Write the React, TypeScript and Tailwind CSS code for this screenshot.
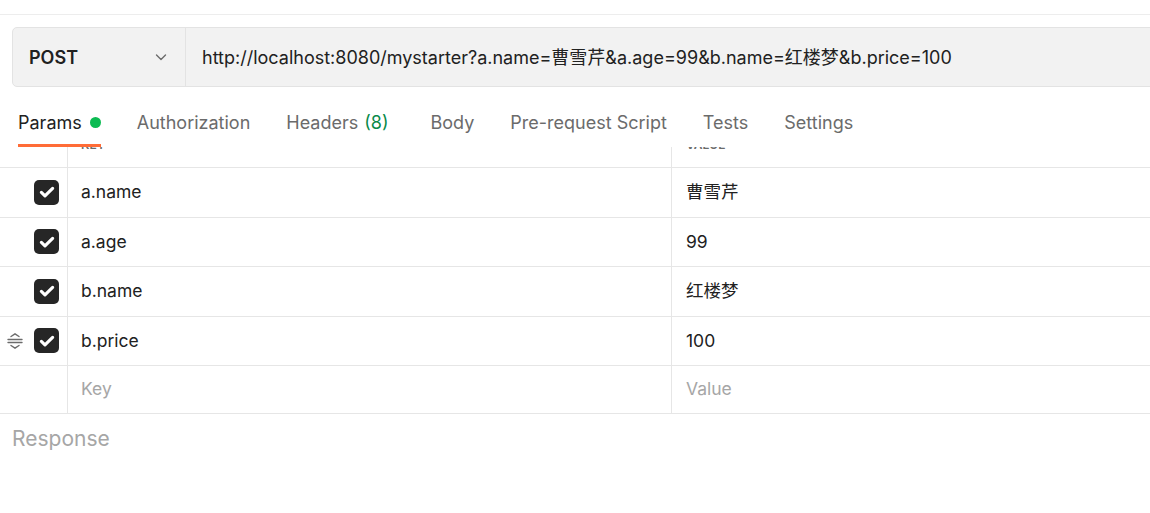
import React from 'react';

interface Param {
  key: string;
  value: string;
  drag?: boolean;
}

const params: Param[] = [
  { key: 'a.name', value: '曹雪芹' },
  { key: 'a.age', value: '99' },
  { key: 'b.name', value: '红楼梦' },
  { key: 'b.price', value: '100', drag: true },
];

const tabs = ['Authorization', 'Headers', 'Body', 'Pre-request Script', 'Tests', 'Settings'];

function Checkbox() {
  return (
    <div className="w-[25px] h-[25px] rounded-[5px] bg-[#262626] flex items-center justify-center">
      <svg width="18" height="18" viewBox="0 0 16 16" fill="none">
        <path d="M3 8.4l3.2 3.1L13 4.8" stroke="#fff" strokeWidth="2.8" strokeLinecap="round" strokeLinejoin="round" />
      </svg>
    </div>
  );
}

function DragHandle() {
  return (
    <svg width="18" height="18" viewBox="0 0 18 18" fill="none" stroke="#6b6b6b" strokeWidth="1.4" strokeLinecap="round" strokeLinejoin="round">
      <path d="M5 4.5L9 1.8l4 2.7" />
      <path d="M2 7.5h14" />
      <path d="M2 10.5h14" />
      <path d="M5 13.5l4 2.7 4-2.7" />
    </svg>
  );
}

export default function App() {
  return (
    <div className="w-full h-[513px] bg-white overflow-hidden text-[#212121]" style={{ fontFamily: 'Inter, "Noto Sans CJK SC", sans-serif' }}>
      {/* top strip */}
      <div className="h-[15px] border-b border-[#ededed]" />

      {/* request bar */}
      <div className="mt-[12px] ml-[12px] mr-[-10px] h-[60px] flex bg-[#f2f2f2] border border-[#e3e3e3] rounded-l-[5px]">
        <div className="w-[173px] flex items-center justify-between pl-[16px] pr-[16px] border-r border-[#e3e3e3]">
          <span className="text-[18px] font-semibold text-[#212121]">POST</span>
          <svg width="16" height="16" viewBox="0 0 16 16" fill="none">
            <path d="M3.5 6l4.5 4.5L12.5 6" stroke="#6b6b6b" strokeWidth="1.4" strokeLinecap="round" strokeLinejoin="round" />
          </svg>
        </div>
        <div className="flex items-center pl-[16px] text-[18px] text-[#212121] whitespace-nowrap">
          http://localhost:8080/mystarter?a.name=曹雪芹&amp;a.age=99&amp;b.name=红楼梦&amp;b.price=100
        </div>
      </div>

      {/* tabs */}
      <div className="h-[60px] flex items-end pl-[18px] gap-[36px] text-[18px] text-[#6b6b6b]">
        <div className="relative h-[47px] flex items-center gap-[8px] pb-[2px] text-[#212121]">
          <span>Params</span>
          <span className="w-[11px] h-[11px] rounded-full bg-[#0cbb52]" />
          <span className="absolute left-0 right-0 bottom-0 h-[3px] bg-[#ff6c37]" />
        </div>
        {tabs.map((t) => (
          <div key={t} className={`h-[47px] flex items-center pb-[2px] whitespace-nowrap ${t === 'Headers' ? 'pr-[6px]' : ''}`}>
            {t}
            {t === 'Headers' && <span className="ml-[6px] text-[#0a8a4a]">(8)</span>}
          </div>
        ))}
      </div>

      {/* params table */}
      <div className="text-[17.5px]">
        <div className="flex h-[21px] border-b border-[#e6e6e6] overflow-hidden text-[12px] text-[#6b6b6b] font-semibold">
          <div className="w-[68px] border-r border-[#e6e6e6]" />
          <div className="w-[604px] border-r border-[#e6e6e6] pl-[13px]">
            <div className="mt-[-8px] leading-[12px]">KEY</div>
          </div>
          <div className="flex-1 pl-[14px]">
            <div className="mt-[-8px] leading-[12px]">VALUE</div>
          </div>
        </div>
        {params.map((p) => (
          <div key={p.key} className="flex h-[49.5px] border-b border-[#e6e6e6]">
            <div className="w-[68px] border-r border-[#e6e6e6] flex items-center justify-end pr-[8px] gap-[10px]">
              {p.drag && <DragHandle />}
              <Checkbox />
            </div>
            <div className="w-[604px] border-r border-[#e6e6e6] flex items-center pl-[13px]">{p.key}</div>
            <div className="flex-1 flex items-center pl-[14px]">{p.value}</div>
          </div>
        ))}
        <div className="flex h-[48px] border-b border-[#e6e6e6] text-[#a6a6a6]">
          <div className="w-[68px] border-r border-[#e6e6e6]" />
          <div className="w-[604px] border-r border-[#e6e6e6] flex items-center pl-[13px]">Key</div>
          <div className="flex-1 flex items-center pl-[14px]">Value</div>
        </div>
      </div>

      {/* response */}
      <div className="pl-[12px] pt-[9px] text-[21px] text-[#a6a6a6]">Response</div>
    </div>
  );
}
